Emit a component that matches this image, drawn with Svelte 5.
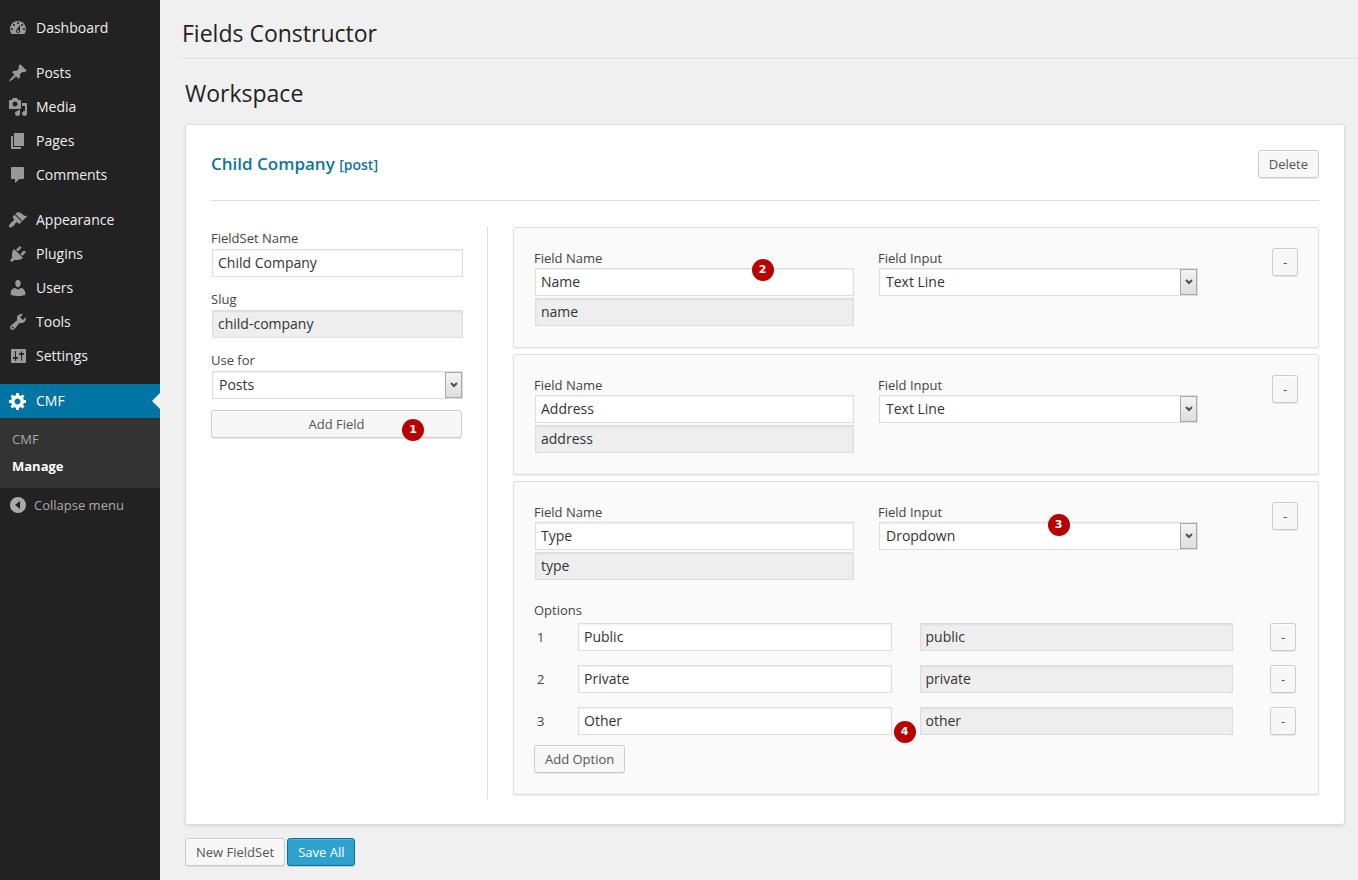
<script>
  const icons = {
    dashboard: 'M3.76 16h12.48c1.1-1.37 1.76-3.11 1.76-5 0-4.42-3.58-8-8-8s-8 3.58-8 8c0 1.89.66 3.63 1.76 5zM10 4c.55 0 1 .45 1 1s-.45 1-1 1-1-.45-1-1 .45-1 1-1zM6 6c.55 0 1 .45 1 1s-.45 1-1 1-1-.45-1-1 .45-1 1-1zm8 0c.55 0 1 .45 1 1s-.45 1-1 1-1-.45-1-1 .45-1 1-1zm-5.37 5.55L12 7v6c0 1.1-.9 2-2 2s-2-.9-2-2c0-.57.24-1.08.63-1.45zM4 10c.55 0 1 .45 1 1s-.45 1-1 1-1-.45-1-1 .45-1 1-1zm12 0c.55 0 1 .45 1 1s-.45 1-1 1-1-.45-1-1 .45-1 1-1zm-5 3c0-.55-.45-1-1-1s-1 .45-1 1 .45 1 1 1 1-.45 1-1z',
    posts: 'M10.44 3.02l1.82-1.82 6.36 6.35-1.83 1.82c-1.05-.68-2.48-.57-3.41.36l-.75.75c-.92.93-1.04 2.35-.35 3.41l-1.83 1.82-2.41-2.41-2.8 2.79c-.42.42-3.38 2.71-3.8 2.29s1.86-3.39 2.28-3.81l2.79-2.79L4.1 9.36l1.83-1.82c1.05.69 2.48.57 3.4-.36l.75-.75c.93-.92 1.05-2.35.36-3.41z',
    media: 'M13 11V4c0-.55-.45-1-1-1h-1.67L9 1H5L3.67 3H2c-.55 0-1 .45-1 1v7c0 .55.45 1 1 1h10c.55 0 1-.45 1-1zM7 4.5c1.38 0 2.5 1.12 2.5 2.5S8.38 9.5 7 9.5 4.5 8.38 4.5 7 5.62 4.5 7 4.5zM14 6h5v10.5c0 1.38-1.12 2.5-2.5 2.5S14 17.88 14 16.5s1.12-2.5 2.5-2.5c.17 0 .34.02.5.05V9h-3V6zm-4 8.05V13h2v3.5c0 1.38-1.12 2.5-2.5 2.5S7 17.88 7 16.5 8.12 14 9.5 14c.17 0 .34.02.5.05z',
    pages: 'M6 15V2h10v13H6zm-1 1h8v2H3V5h2v11z',
    comments: 'M4 2h11c.55 0 1 .45 1 1v10c0 .55-.45 1-1 1h-3.5L7 18v-4H4c-.55 0-1-.45-1-1V3c0-.55.45-1 1-1z',
    appearance: 'M14.48 11.06L7.41 3.99l1.5-1.5c.5-.56 2.3-.47 3.51.32 1.21.8 1.43 1.28 2.91 2.1 1.18.64 2.45 1.26 4.45.85zm-.71.71L6.7 4.7 4.93 6.47c-.39.39-.39 1.02 0 1.41l1.06 1.06c.39.39.39 1.03 0 1.42-.6.6-1.43 1.11-2.21 1.69-.35.26-.7.53-1.01.84C1.43 14.23.4 16.08 1.4 17.07c.99 1 2.84-.03 4.18-1.36.31-.31.58-.66.85-1.02.57-.78 1.08-1.61 1.69-2.21.39-.39 1.02-.39 1.41 0l1.06 1.06c.39.39 1.02.39 1.41 0z',
    plugins: 'M13.11 4.36L9.87 7.6 8 5.73l3.24-3.24c.35-.34 1.05-.2 1.56.32.52.51.66 1.21.31 1.55zm-8 1.77l.91-1.12 9.01 9.01-1.19.84c-.71.71-2.63 1.16-3.82 1.16H6.14L4.9 17.26c-.59.59-1.54.59-2.12 0-.59-.58-.59-1.53 0-2.12l1.24-1.24v-3.88c0-1.13.4-3.19 1.09-3.89zm7.26 3.97l3.24-3.24c.34-.35 1.04-.21 1.55.31.52.51.66 1.21.31 1.55l-3.24 3.25z',
    users: 'M10 9.25c-2.27 0-2.73-3.44-2.73-3.44C7 4.02 7.82 2 9.97 2c2.16 0 2.98 2.02 2.71 3.81 0 0-.41 3.44-2.68 3.44zm0 2.57L12.72 10c2.39 0 4.52 2.33 4.52 4.53v2.49s-3.65 1.13-7.24 1.13c-3.65 0-7.24-1.13-7.24-1.13v-2.49c0-2.25 1.94-4.48 4.47-4.48z',
    tools: 'M16.68 9.77c-1.34 1.34-3.3 1.67-4.95.99l-5.41 6.52c-.99.99-2.59.99-3.58 0s-.99-2.59 0-3.57l6.52-5.42c-.68-1.65-.35-3.61.99-4.95 1.28-1.28 3.12-1.62 4.72-1.06l-2.89 2.89 2.82 2.82 2.86-2.87c.53 1.58.18 3.39-1.08 4.65zM3.81 16.21c.4.39 1.04.39 1.43 0 .4-.4.4-1.04 0-1.43-.39-.4-1.03-.4-1.43 0-.39.39-.39 1.03 0 1.43z',
    settings: 'M18 16V4c0-.55-.45-1-1-1H4c-.55 0-1 .45-1 1v12c0 .55.45 1 1 1h13c.55 0 1-.45 1-1zM8 11h1c.55 0 1 .45 1 1s-.45 1-1 1H8v1.5c0 .28-.22.5-.5.5s-.5-.22-.5-.5V13H6c-.55 0-1-.45-1-1s.45-1 1-1h1V5.5c0-.28.22-.5.5-.5s.5.22.5.5V11zm5-2h-1c-.55 0-1-.45-1-1s.45-1 1-1h1V5.5c0-.28.22-.5.5-.5s.5.22.5.5V7h1c.55 0 1 .45 1 1s-.45 1-1 1h-1v5.5c0 .28-.22.5-.5.5s-.5-.22-.5-.5V9z',
    generic: 'M18 12h-2.18c-.17.7-.44 1.35-.81 1.93l1.54 1.54-2.1 2.1-1.54-1.54c-.58.36-1.23.63-1.91.79V19H8v-2.18c-.68-.16-1.33-.43-1.91-.79l-1.54 1.54-2.12-2.12 1.54-1.54c-.36-.58-.63-1.23-.79-1.91H1V9.03h2.17c.16-.7.44-1.35.8-1.94L2.43 5.55l2.1-2.1 1.54 1.54c.58-.37 1.24-.64 1.93-.81V2h3v2.18c.68.16 1.33.43 1.91.79l1.54-1.54 2.12 2.12-1.54 1.54c.36.59.64 1.24.8 1.94H18V12zm-8.5 1.5c1.66 0 3-1.34 3-3s-1.34-3-3-3-3 1.34-3 3 1.34 3 3 3z',
    collapse: 'M10 2a8 8 0 1 0 0 16 8 8 0 0 0 0-16zM12 6v8l-5-4z',
  };

  const menu = [
    [{ name: 'Dashboard', icon: 'dashboard' }],
    [
      { name: 'Posts', icon: 'posts' },
      { name: 'Media', icon: 'media' },
      { name: 'Pages', icon: 'pages' },
      { name: 'Comments', icon: 'comments' },
    ],
    [
      { name: 'Appearance', icon: 'appearance' },
      { name: 'Plugins', icon: 'plugins' },
      { name: 'Users', icon: 'users' },
      { name: 'Tools', icon: 'tools' },
      { name: 'Settings', icon: 'settings' },
    ],
  ];

  const fields = [
    { name: 'Name', slug: 'name', input: 'Text Line', nameMark: 2 },
    { name: 'Address', slug: 'address', input: 'Text Line' },
    {
      name: 'Type',
      slug: 'type',
      input: 'Dropdown',
      inputMark: 3,
      options: [
        { name: 'Public', slug: 'public' },
        { name: 'Private', slug: 'private' },
        { name: 'Other', slug: 'other', mark: 4 },
      ],
    },
  ];
</script>

{#snippet icon(name)}
  <svg class="icon" viewBox="0 0 20 20" aria-hidden="true"><path fill-rule="evenodd" d={icons[name]} /></svg>
{/snippet}

{#snippet picker(id, value, choices)}
  <div class="picker">
    <select {id} {value}>
      {#each choices as choice}<option>{choice}</option>{/each}
    </select>
    <span class="arrow">
      <svg viewBox="0 0 8 6" aria-hidden="true"><path d="M1 1l3 3 3-3" /></svg>
    </span>
  </div>
{/snippet}

<div class="page">
  <nav class="sidebar">
    {#each menu as group}
      <ul class="group">
        {#each group as item}
          <li><a class="item" href="#top">{@render icon(item.icon)}{item.name}</a></li>
        {/each}
      </ul>
    {/each}
    <a class="item current" href="#top">{@render icon('generic')}CMF</a>
    <ul class="submenu">
      <li><a href="#top">CMF</a></li>
      <li><a class="active" href="#top">Manage</a></li>
    </ul>
    <button class="collapse" type="button">{@render icon('collapse')}Collapse menu</button>
  </nav>

  <main>
    <header><h1>Fields Constructor</h1></header>

    <section class="workspace">
      <h2>Workspace</h2>

      <div class="panel">
        <div class="panel-head">
          <h3>Child Company <small>[post]</small></h3>
          <button class="btn" type="button">Delete</button>
        </div>

        <div class="columns">
          <div class="side">
            <div class="side-field">
              <label for="set-name">FieldSet Name</label>
              <div class="inset"><input id="set-name" type="text" value="Child Company" /></div>
            </div>
            <div class="side-field">
              <label for="set-slug">Slug</label>
              <div class="inset"><input id="set-slug" type="text" value="child-company" readonly /></div>
            </div>
            <div class="side-field">
              <label for="set-use">Use for</label>
              <div class="inset">{@render picker('set-use', 'Posts', ['Posts', 'Pages'])}</div>
            </div>
            <div class="marked add-field">
              <button class="btn" type="button">Add Field</button>
              <span class="mark on-button">1</span>
            </div>
          </div>

          <div class="cards">
            {#each fields as field, i}
              <article class="card">
                <div class="field-row">
                  <div class="field">
                    <label for="name-{i}">Field Name</label>
                    <div class="inset marked">
                      <input id="name-{i}" type="text" value={field.name} />
                      <input type="text" value={field.slug} readonly aria-label="Field slug" />
                      {#if field.nameMark}<span class="mark on-name">{field.nameMark}</span>{/if}
                    </div>
                  </div>
                  <div class="field">
                    <label for="input-{i}">Field Input</label>
                    <div class="inset marked">
                      {@render picker(`input-${i}`, field.input, ['Text Line', 'Dropdown'])}
                      {#if field.inputMark}<span class="mark on-select">{field.inputMark}</span>{/if}
                    </div>
                  </div>
                  <button class="btn minus" type="button" aria-label="Remove field">-</button>
                </div>

                {#if field.options}
                  <div class="options">
                    <div class="caption">Options</div>
                    <ol>
                      {#each field.options as option, n}
                        <li>
                          <span class="number">{n + 1}</span>
                          <div class="marked">
                            <input type="text" value={option.name} aria-label="Option name" />
                            {#if option.mark}<span class="mark after-input">{option.mark}</span>{/if}
                          </div>
                          <input type="text" value={option.slug} readonly aria-label="Option slug" />
                          <button class="btn minus" type="button" aria-label="Remove option">-</button>
                        </li>
                      {/each}
                    </ol>
                    <button class="btn" type="button">Add Option</button>
                  </div>
                {/if}
              </article>
            {/each}
          </div>
        </div>
      </div>

      <div class="actions">
        <button class="btn" type="button">New FieldSet</button>
        <button class="btn primary" type="button">Save All</button>
      </div>
    </section>
  </main>
</div>

<style>
  :global(body) {
    background: #f0f0f0;
  }
  .page, .page * {
    box-sizing: border-box;
  }
  .page {
    display: flex;
    min-height: 100vh;
    font-family: 'Open Sans', sans-serif;
    font-size: 13px;
    line-height: 20px;
    color: #444;
  }
  ul, ol {
    list-style: none;
    margin: 0;
    padding: 0;
  }
  a {
    text-decoration: none;
  }
  button, input, select {
    font-family: inherit;
    margin: 0;
  }

  .sidebar {
    flex: 0 0 160px;
    background: #222;
    padding-top: 11px;
  }
  .group {
    margin-bottom: 11px;
  }
  .item, .collapse {
    display: flex;
    align-items: center;
    gap: 8px;
    height: 34px;
    padding: 0 8px;
    font-size: 14px;
    color: #eee;
  }
  .icon {
    width: 20px;
    height: 20px;
    fill: #999;
  }
  .item.current {
    position: relative;
    background: #0074a2;
    color: #fff;
  }
  .current .icon {
    fill: #fff;
  }
  .current::after {
    content: '';
    position: absolute;
    right: 0;
    top: 9px;
    border: 8px solid transparent;
    border-left: 0;
    border-right-color: #f0f0f0;
  }
  .submenu {
    background: #333;
    padding: 8px 12px;
  }
  .submenu a {
    display: block;
    line-height: 27px;
    color: #aaa;
  }
  .submenu a.active {
    color: #fff;
    font-weight: 700;
  }
  .collapse {
    gap: 6px;
    width: 100%;
    border: 0;
    background: none;
    font-size: 13px;
    color: #aaa;
  }
  .collapse .icon {
    fill: #aaa;
  }

  main {
    flex: 1;
    min-width: 0;
  }
  header {
    margin-left: 22px;
    padding: 18px 0 10px;
    border-bottom: 1px solid #dadada;
    box-shadow: 0 1px 0 #f9f9f9;
  }
  h1, h2 {
    margin: 0;
    font-size: 23px;
    line-height: 30px;
    font-weight: 400;
    color: #222;
  }
  .workspace {
    padding: 19px 13px 14px 25px;
  }
  .panel {
    margin-top: 16px;
    padding: 25px;
    background: #fff;
    border: 1px solid #ddd;
    border-radius: 3px;
    box-shadow: 0 1px 3px rgba(0, 0, 0, 0.1);
  }
  .panel-head {
    display: flex;
    align-items: center;
    justify-content: space-between;
    padding-bottom: 22px;
    border-bottom: 1px solid #ddd;
  }
  h3 {
    margin: 0;
    font-size: 17px;
    line-height: 28px;
    font-weight: 600;
    color: #0f759f;
  }
  h3 small {
    font-size: 14px;
    line-height: 20px;
  }

  .columns {
    display: flex;
    gap: 25px;
    margin-top: 26px;
  }
  .side {
    flex: 0 0 277px;
    padding-right: 24px;
    border-right: 1px solid #ddd;
  }
  .side-field {
    margin-bottom: 11px;
  }
  label {
    display: block;
  }
  .side label {
    line-height: 22px;
  }
  .inset {
    padding-left: 1px;
  }
  .marked {
    position: relative;
  }
  .add-field {
    padding-right: 1px;
  }
  .add-field .btn {
    width: 100%;
  }

  input, select {
    display: block;
    width: 100%;
    height: 28px;
    padding: 0 5px 2px;
    border: 1px solid #ddd;
    border-radius: 0;
    background: #fff;
    box-shadow: inset 0 1px 2px rgba(0, 0, 0, 0.07);
    font-size: 14px;
    color: #333;
    outline: 0;
  }
  input[readonly] {
    background: #eee;
  }
  input + input {
    margin-top: 2px;
  }
  select {
    appearance: none;
    padding: 0 24px 2px 6px;
  }
  .picker {
    position: relative;
  }
  .arrow {
    position: absolute;
    top: 1px;
    right: 1px;
    bottom: 1px;
    width: 17px;
    display: flex;
    align-items: center;
    justify-content: center;
    border: 1px solid #a9a9a9;
    background: linear-gradient(#f3f3f3, #dedede);
    pointer-events: none;
  }
  .arrow svg {
    width: 8px;
    height: 6px;
    fill: none;
    stroke: #505050;
    stroke-width: 2;
  }

  .btn {
    height: 28px;
    padding: 0 10px;
    border: 1px solid #ccc;
    border-radius: 3px;
    background: #f7f7f7;
    box-shadow: inset 0 1px 0 #fff, 0 1px 0 rgba(0, 0, 0, 0.08);
    font-size: 13px;
    line-height: 26px;
    color: #555;
    white-space: nowrap;
  }
  .minus {
    width: 26px;
    padding: 0;
  }
  .primary {
    background: #2ea2cc;
    border-color: #0074a2;
    box-shadow: inset 0 1px 0 rgba(120, 200, 230, 0.5), 0 1px 0 rgba(0, 0, 0, 0.15);
    color: #fff;
  }

  .cards {
    flex: 1;
    min-width: 0;
    display: flex;
    flex-direction: column;
    gap: 6px;
    padding-bottom: 4px;
  }
  .card {
    padding: 20px 20px 21px;
    background: #fafafa;
    border: 1px solid #ddd;
    border-radius: 3px;
    box-shadow: 0 1px 2px rgba(0, 0, 0, 0.07);
  }
  .field-row {
    display: grid;
    grid-template-columns: 80fr 80fr 19fr;
    column-gap: 24px;
    align-items: start;
  }
  .field-row .minus {
    justify-self: end;
  }
  .options {
    margin-top: 20px;
  }
  .options ol {
    display: grid;
    gap: 14px;
    margin: 3px 0 10px;
  }
  .options li {
    display: grid;
    grid-template-columns: 41px 1fr 28px 1fr 37px 26px;
    align-items: center;
    padding: 0 2px 0 3px;
  }
  .options li > input {
    grid-column: 4;
  }
  .options .minus {
    grid-column: 6;
  }

  .mark {
    position: absolute;
    width: 22px;
    height: 22px;
    border-radius: 50%;
    background: #b80000;
    color: #fff;
    font: 700 11px/22px 'DejaVu Sans', sans-serif;
    text-align: center;
  }
  .on-button {
    right: 39px;
    top: 9px;
  }
  .on-name {
    left: 68%;
    top: -9px;
  }
  .on-select {
    left: 53%;
    top: -8px;
  }
  .after-input {
    left: calc(100% + 2px);
    top: 14px;
  }

  .actions {
    display: flex;
    gap: 2px;
    margin-top: 13px;
  }
</style>
